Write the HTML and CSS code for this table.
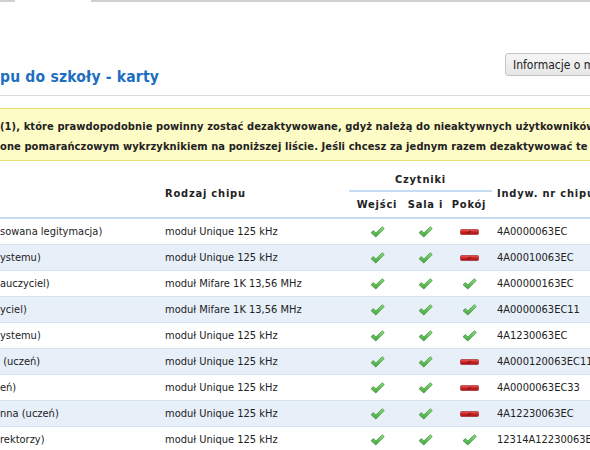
FILE: index.html
```html
<!DOCTYPE html>
<html lang="pl">
<head>
<meta charset="utf-8">
<link rel="stylesheet" href="styles.css">
</head>
<body>
<div class="page">
  <div class="tabs"><span class="seg seg-a"></span><span class="seg seg-gap"></span><span class="seg seg-b"></span></div>
  <div class="head">
    <h1 class="title">pu do szkoły - karty</h1>
    <button class="btn">Informacje o modułach</button>
  </div>
  <div class="notice">
    <p>(1), które prawdopodobnie powinny zostać dezaktywowane, gdyż należą do nieaktywnych użytkowników systemu.</p>
    <p>one pomarańczowym wykrzyknikiem na poniższej liście. Jeśli chcesz za jednym razem dezaktywować te karty, kliknij</p>
  </div>
  <table class="grid">
    <colgroup>
      <col class="c-name"><col class="c-type"><col class="c-r1"><col class="c-r2"><col class="c-r3"><col class="c-id">
    </colgroup>
    <thead>
      <tr>
        <th rowspan="2"></th>
        <th rowspan="2" class="th-left">Rodzaj chipu</th>
        <th colspan="3" class="th-group">Czytniki</th>
        <th rowspan="2" class="th-left th-id">Indyw. nr chipu</th>
      </tr>
      <tr class="sub">
        <th>Wejści</th><th>Sala i</th><th>Pokój</th>
      </tr>
    </thead>
    <tbody id="rows"></tbody>
  </table>
</div>
<svg width="0" height="0" class="defs">
  <defs>
    <linearGradient id="gch" x1="0" y1="0" x2="0" y2="1">
      <stop offset="0" stop-color="#8fe07f"/>
      <stop offset="1" stop-color="#3fa63a"/>
    </linearGradient>
    <linearGradient id="grd" x1="0" y1="0" x2="0" y2="1">
      <stop offset="0" stop-color="#e86060"/>
      <stop offset="0.5" stop-color="#cc2020"/>
      <stop offset="1" stop-color="#a01818"/>
    </linearGradient>
    <symbol id="ok" viewBox="0 0 16 13">
      <path d="M1 7.2 L3.6 5 L6.2 7.6 L13.2 0.8 L15.3 2.8 L6.2 12 Z" fill="url(#gch)" stroke="#3b8f36" stroke-width="0.8" stroke-linejoin="round"/>
    </symbol>
    <symbol id="no" viewBox="0 0 19 6">
      <rect x="0.5" y="0.5" width="18" height="5" rx="1" fill="url(#grd)" stroke="#9a1c1c" stroke-width="0.6"/>
      <path d="M7.5 4 L11 2.2" stroke="#5a0c0c" stroke-width="0.9"/>
    </symbol>
  </defs>
</svg>
<script src="app.js"></script>
</body>
</html>
```
FILE: app.js
```js
const rows = [
  ["sowana legitymacja)", "moduł Unique 125 kHz", 1, 1, 0, "4A0000063EC"],
  ["ystemu)", "moduł Unique 125 kHz", 1, 1, 0, "4A00010063EC"],
  ["auczyciel)", "moduł Mifare 1K 13,56 MHz", 1, 1, 1, "4A00000163EC"],
  ["yciel)", "moduł Mifare 1K 13,56 MHz", 1, 1, 1, "4A0000063EC11"],
  ["ystemu)", "moduł Unique 125 kHz", 1, 1, 1, "4A1230063EC"],
  [" (uczeń)", "moduł Unique 125 kHz", 1, 1, 0, "4A000120063EC11"],
  ["eń)", "moduł Unique 125 kHz", 1, 1, 0, "4A0000063EC33"],
  ["nna (uczeń)", "moduł Unique 125 kHz", 1, 1, 0, "4A12230063EC"],
  ["rektorzy)", "moduł Unique 125 kHz", 1, 1, 1, "12314A12230063E"]
];
const icon = v => v
  ? '<svg class="ic ok" viewBox="0 0 16 13"><use href="#ok"/></svg>'
  : '<svg class="ic no" viewBox="0 0 19 6"><use href="#no"/></svg>';
document.getElementById("rows").innerHTML = rows.map(r =>
  `<tr><td class="name">${r[0].replace(/^ /, "&nbsp;")}</td><td>${r[1]}</td>` +
  `<td class="ic-cell">${icon(r[2])}</td><td class="ic-cell">${icon(r[3])}</td><td class="ic-cell">${icon(r[4])}</td>` +
  `<td class="id">${r[5]}</td></tr>`).join("");
```
FILE: styles.css
```css
html, body {
  margin: 0;
  padding: 0;
  background: #fff;
}
body {
  width: 590px;
  height: 450px;
  overflow: hidden;
  font-family: "DejaVu Sans Condensed", "DejaVu Sans", sans-serif;
  font-size: 11px;
  color: #222;
}
.page {
  width: 590px;
  overflow: hidden;
}
.defs { position: absolute; }
.tabs {
  display: flex;
  height: 2px;
}
.seg { display: block; height: 2px; }
.seg-a { width: 15px; background: #cfcfcf; }
.seg-gap { width: 76px; background: #fff; }
.seg-b { flex: 1; background: #cfcfcf; }

.head {
  display: flex;
  align-items: flex-end;
  height: 93px;
  border-bottom: 1px solid #dcdcdc;
  white-space: nowrap;
}
.title {
  flex: 0 0 505px;
  margin: 0 0 9px 0;
  font-size: 15.5px;
  font-weight: bold;
  color: #1d6fc0;
  letter-spacing: 0.2px;
}
.btn {
  flex: 0 0 auto;
  margin: 0 0 19px 0;
  height: 23px;
  padding: 0 7px;
  font-family: "DejaVu Sans Condensed", "DejaVu Sans", sans-serif;
  font-size: 12px;
  color: #222;
  background: linear-gradient(#f6f6f6, #e6e6e6);
  border: 1px solid #c4c4c4;
  border-radius: 3px;
  white-space: nowrap;
}

.notice {
  margin-top: 12px;
  height: 53px;
  box-sizing: border-box;
  padding-top: 8px;
  background: #fdfbc6;
  border-top: 1px solid #e8df70;
  border-bottom: 1px solid #e8df70;
  white-space: nowrap;
  font-weight: bold;
  font-size: 11px;
  color: #222;
}
.notice p {
  margin: 0;
  line-height: 20px;
  letter-spacing: 0.1px;
}

.grid {
  margin-top: 8px;
  border-collapse: collapse;
  table-layout: fixed;
  width: 660px;
  white-space: nowrap;
}
.c-name { width: 157px; }
.c-type { width: 192px; }
.c-r1 { width: 56px; }
.c-r2 { width: 41px; }
.c-r3 { width: 46px; }
.c-id { width: 168px; }

.grid th {
  font-weight: bold;
  letter-spacing: 0.8px;
  font-size: 11px;
  padding: 0;
  vertical-align: middle;
}
.grid thead tr:first-child th { height: 21px; }
.grid thead .sub th { height: 25px; }
.grid thead tr:last-child th,
.grid thead th[rowspan] { border-bottom: 2px solid #c5dcf2; }
.th-left { text-align: left; padding-left: 8px !important; }
.th-id { padding-left: 5px !important; }
.th-group {
  border-bottom: 2px solid #c5dcf2;
  text-align: center;
}

.grid td {
  height: 25px;
  padding: 0 0 0 8px;
  border-bottom: 1px solid #d6e3f0;
  overflow: hidden;
  font-size: 11px;
}
.grid td.name { padding-left: 0; }
.grid td.id { padding-left: 5px; }
.grid td.ic-cell { padding: 0; text-align: center; }
.grid tbody tr:nth-child(even) td { background: #e7eff9; }

.ic { display: inline-block; vertical-align: middle; }
.ok { width: 15px; height: 12px; }
.no { width: 19px; height: 6px; }
```
